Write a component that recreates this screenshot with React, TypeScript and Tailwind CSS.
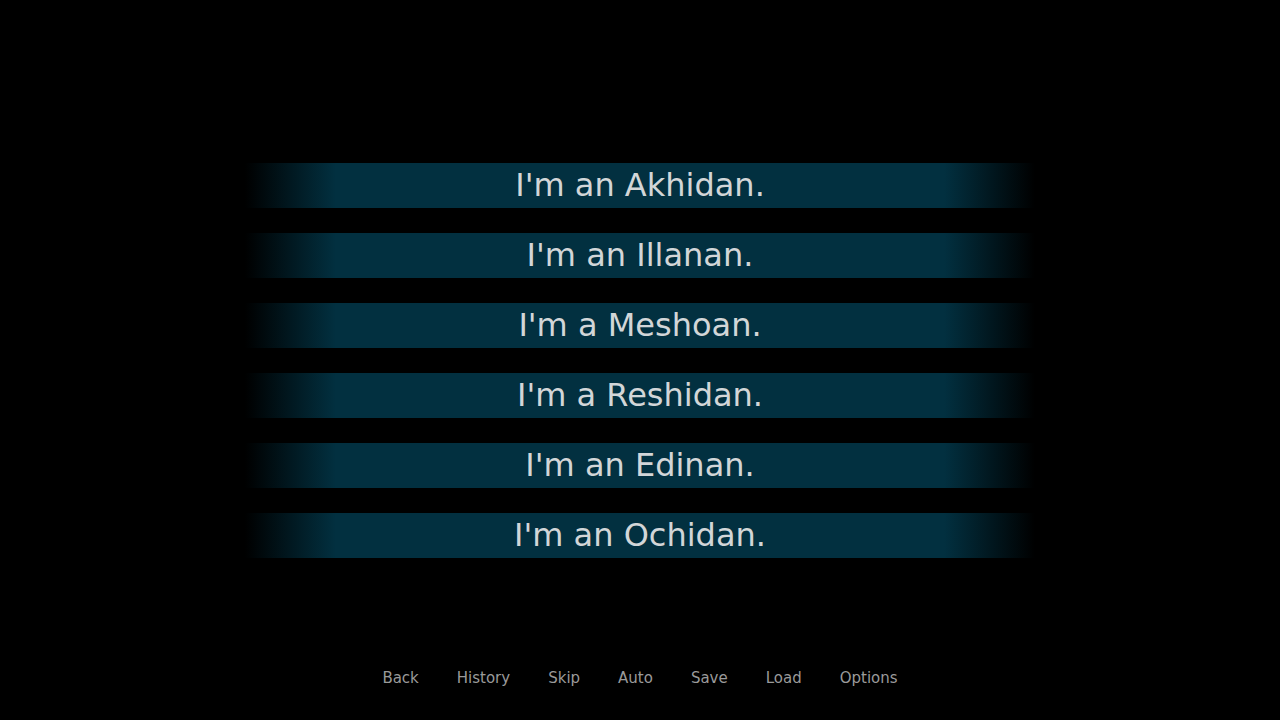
const choices = [
  "I'm an Akhidan.",
  "I'm an Illanan.",
  "I'm a Meshoan.",
  "I'm a Reshidan.",
  "I'm an Edinan.",
  "I'm an Ochidan.",
]

const quickMenu = ['Back', 'History', 'Skip', 'Auto', 'Save', 'Load', 'Options']

export default function App() {
  return (
    <div
      className="w-[1280px] h-[720px] bg-black flex flex-col items-center overflow-hidden"
      style={{ fontFamily: '"DejaVu Sans", "Liberation Sans", sans-serif' }}
    >
      <div className="mt-[163px] w-[790px] flex flex-col gap-[25px]">
        {choices.map(c => (
          <button
            key={c}
            className="h-[45px] w-full flex items-center justify-center pb-[2px] text-[32px] leading-none text-[#d2d6d8] bg-[linear-gradient(to_right,rgba(2,48,64,0)_0%,#023040_11.5%,#023040_88.5%,rgba(2,48,64,0)_100%)]"
          >
            {c}
          </button>
        ))}
      </div>

      <div className="mt-[110px] flex items-center gap-[38px] h-[20px]">
        {quickMenu.map(q => (
          <button key={q} className="text-[15px] leading-[20px] text-[#9a9a9a]">
            {q}
          </button>
        ))}
      </div>
    </div>
  )
}
